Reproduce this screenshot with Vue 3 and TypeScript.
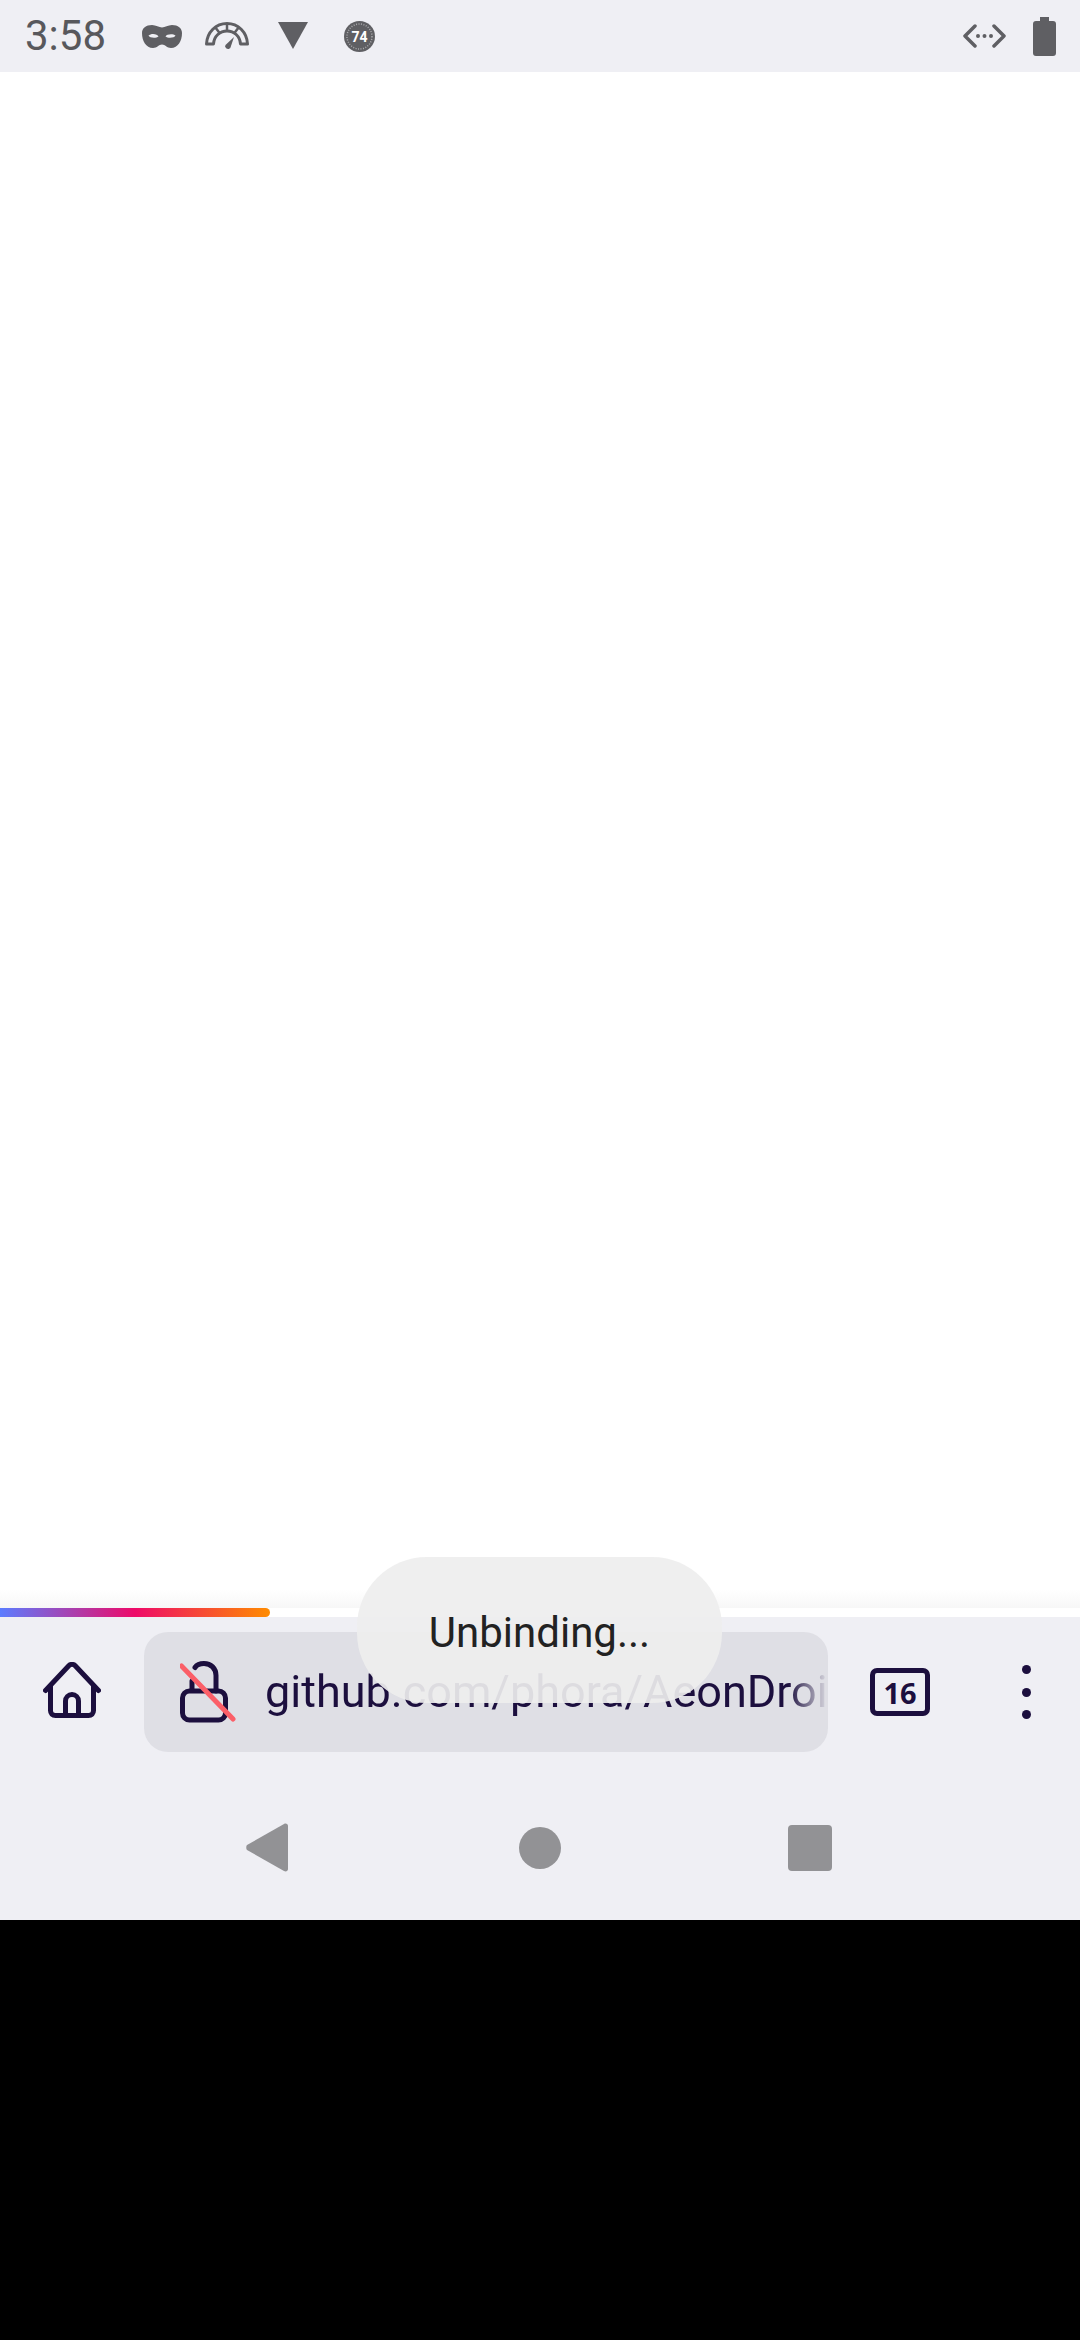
<script setup lang="ts">
const url: string = 'github.com/phora/AeonDroid'
const tabs: number = 16
</script>

<template>
  <div class="screen">
    <header class="status">
      <span class="clock">3:58</span>
      <svg class="mask" viewBox="0 0 40 23"><path fill-rule="evenodd" d="M10 0c4 0 7 2.500 10 2.500S26 0 30 0c6 0 10 3 10 8 0 8-4 15-11 15-4 0-6-3.500-9-3.500S15 23 11 23C4 23 0 16 0 8c0-5 4-8 10-8zM6.500 10.500c1 2.500 7.500 3 10 1-1-3-7.500-3.500-10-1zM23.500 11.500c2.500 2 9 1.500 10-1-2.500-2-9-1.500-10 1z"/></svg>
      <svg class="gauge" viewBox="0 0 44 28" fill="none" stroke="#5f5f63"><path stroke-width="3" stroke-linejoin="round" d="M1.500 22C2 10 11 1.500 22 1.500S42 10 42.500 22h-7C35 14 29 9 22 9S9 14 8.500 22z"/><path stroke-width="2.500" d="M10 5l5 6.500M34 5l-5 6.500M22 1.500V9"/><path fill="#5f5f63" stroke="none" d="M29 15l-3.500 10.500c-1.500 3-6.500 1-5-2.500z"/></svg>
      <svg class="wifi" viewBox="0 0 30 27"><path d="M0 0h30L15 27z"/></svg>
      <svg class="data" viewBox="0 0 31 31">
        <circle cx="15.500" cy="15.500" r="15.500" fill="#5f5f63"/>
        <circle cx="15.500" cy="15.500" r="12.500" fill="none" stroke="#c9c9cc" stroke-width="1.500" stroke-dasharray="1 1.500" opacity=".7"/>
        <text x="15.500" y="20.500" text-anchor="middle" class="dataval">74</text>
      </svg>
      <span class="spacer"></span>
      <svg class="code" viewBox="0 0 43 24" fill="none" stroke="#5f5f63" stroke-width="3.500" stroke-linecap="round" stroke-linejoin="round"><path d="M12 2L2 12l10 10M31 2l10 10-10 10"/><path stroke-width="4" stroke-dasharray="0 6.500" d="M15 12h14"/></svg>
      <svg class="battery" viewBox="0 0 23 39"><path d="M7 0h9v4h4c2 0 3 1 3 3v29c0 2-1 3-3 3H3c-2 0-3-1-3-3V7c0-2 1-3 3-3h4z"/></svg>
    </header>

    <main class="page"></main>
    <div class="fade"></div>
    <div class="track"><div class="bar"></div></div>

    <section class="toolbar">
      <div class="slot home">
        <svg class="homeicon" width="58" height="58" viewBox="0 0 58 58" fill="none" stroke="#1c0f3e" stroke-width="5" stroke-linecap="round" stroke-linejoin="round"><path d="M2.500 28.500L26 3.500c1.500-1.500 4.500-1.500 6 0L55.500 28.500"/><path d="M7.500 24v24.500c0 3 2 5 5 5h33c3 0 5-2 5-5V24"/><path d="M22.500 53.500V39a6.500 6.500 0 0 1 13 0v14.500"/></svg>
      </div>
      <div class="urlbar">
        <svg class="lock" width="56" height="62" viewBox="0 0 56 62" fill="none" stroke-linecap="round"><path stroke="#1c0f3e" stroke-width="5" d="M12 20v8"/><path stroke="#1c0f3e" stroke-width="5" d="M15 6.500c2-3 5-4 9-4 7 0 12 5 12 12V30"/><rect x="2.500" y="30" width="43" height="29" rx="7" stroke="#1c0f3e" stroke-width="5"/><path stroke="#fb5f68" stroke-width="5" d="M1.500 5L53 58"/></svg>
        <span class="url">{{ url }}</span>
      </div>
      <div class="slot tabs"><span class="tabbox">{{ tabs }}</span></div>
      <div class="slot menu"><i></i><i></i><i></i></div>
    </section>

    <nav class="nav">
      <svg class="back" viewBox="0 0 42 49"><path d="M1 22L38 1c2-1 4 0 4 2v43c0 2-2 3-4 2L1 27c-1-1-1-4 0-5z"/></svg>
      <svg class="circle" viewBox="0 0 42 42"><circle cx="21" cy="21" r="21"/></svg>
      <svg class="square" viewBox="0 0 44 46"><rect width="44" height="46" rx="4"/></svg>
    </nav>

    <div class="black"></div>

    <div class="toast">Unbinding...</div>
  </div>
</template>

<style scoped>
.screen {
  position: relative;
  display: flex;
  flex-direction: column;
  width: 1080px;
  height: 2340px;
  overflow: hidden;
  background: #000;
  font-family: "Noto Sans", sans-serif;
}
.status {
  display: flex;
  align-items: center;
  height: 72px;
  flex: none;
  padding: 0 24px 0 25px;
  box-sizing: border-box;
  background: #efeff4;
  fill: #5f5f63;
}
.clock {
  font: 42px/1 Roboto, sans-serif;
  color: #58585c;
  width: 117px;
}
.mask { width: 40px; height: 23px; margin-right: 23px; }
.gauge { width: 44px; height: 28px; margin-right: 29px; }
.wifi { width: 30px; height: 27px; margin-right: 36px; margin-top: -2px; }
.data { width: 31px; height: 31px; }
.dataval {
  fill: #fff;
  font: 700 14px Roboto, sans-serif;
}
.spacer { flex: 1; }
.code { width: 43px; height: 24px; margin-right: 27px; }
.battery { width: 23px; height: 39px; }
.page { flex: none; height: 1518px; background: #fff; }
.fade {
  flex: none;
  height: 18px;
  background: linear-gradient(#fff, #f7f7f7);
}
.track { flex: none; height: 9px; background: #fff; }
.bar {
  width: 270px;
  height: 9px;
  border-radius: 0 5px 5px 0;
  background: linear-gradient(90deg, #5b7cff 0%, #ee0a68 50%, #ff8c00 100%);
}
.toolbar {
  flex: none;
  display: flex;
  align-items: center;
  height: 150px;
  background: #efeff4;
}
.slot { display: flex; align-items: center; justify-content: center; }
.home { width: 144px; }
.homeicon { margin-top: -2px; }
.urlbar {
  display: flex;
  align-items: center;
  width: 684px;
  height: 120px;
  box-sizing: border-box;
  padding-left: 36px;
  border-radius: 24px;
  background: #dfdfe5;
  overflow: hidden;
}
.lock { flex: none; margin-right: 29px; }
.url {
  flex: 1;
  min-width: 0;
  overflow: hidden;
  white-space: nowrap;
  font-family: Roboto, sans-serif;
  font-size: 45px;
  line-height: 60px;
  color: #1c0f3e;
  -webkit-mask-image: linear-gradient(90deg, #000 calc(100% - 40px), transparent);
  mask-image: linear-gradient(90deg, #000 calc(100% - 40px), transparent);
}
.tabs { width: 144px; }
.tabbox {
  display: flex;
  align-items: center;
  justify-content: center;
  width: 60px;
  height: 48px;
  box-sizing: border-box;
  border: 5px solid #1c0f3e;
  border-radius: 7px;
  color: #1c0f3e;
  font-weight: 700;
  font-size: 29px;
  line-height: 1;
}
.menu {
  flex: 1;
  flex-direction: column;
  gap: 13.500px;
}
.menu i {
  display: block;
  width: 9px;
  height: 9px;
  border-radius: 50%;
  background: #1c0f3e;
}
.nav {
  flex: none;
  display: flex;
  align-items: center;
  height: 153px;
  box-sizing: border-box;
  padding: 8px 0 0 246px;
  background: #efeff4;
  fill: #929295;
}
.back { width: 42px; height: 49px; margin-right: 231px; }
.circle { width: 42px; height: 42px; margin-right: 227px; }
.square { width: 44px; height: 46px; }
.black { flex: 1; background: #000; }
.toast {
  position: absolute;
  left: 357px;
  top: 1557px;
  display: flex;
  align-items: center;
  justify-content: center;
  width: 365px;
  height: 146px;
  box-sizing: border-box;
  padding-top: 4px;
  border-radius: 70px;
  background: rgba(238, 238, 238, 0.92);
  color: #222;
  font-family: Roboto, sans-serif;
  font-size: 42px;
}
</style>
